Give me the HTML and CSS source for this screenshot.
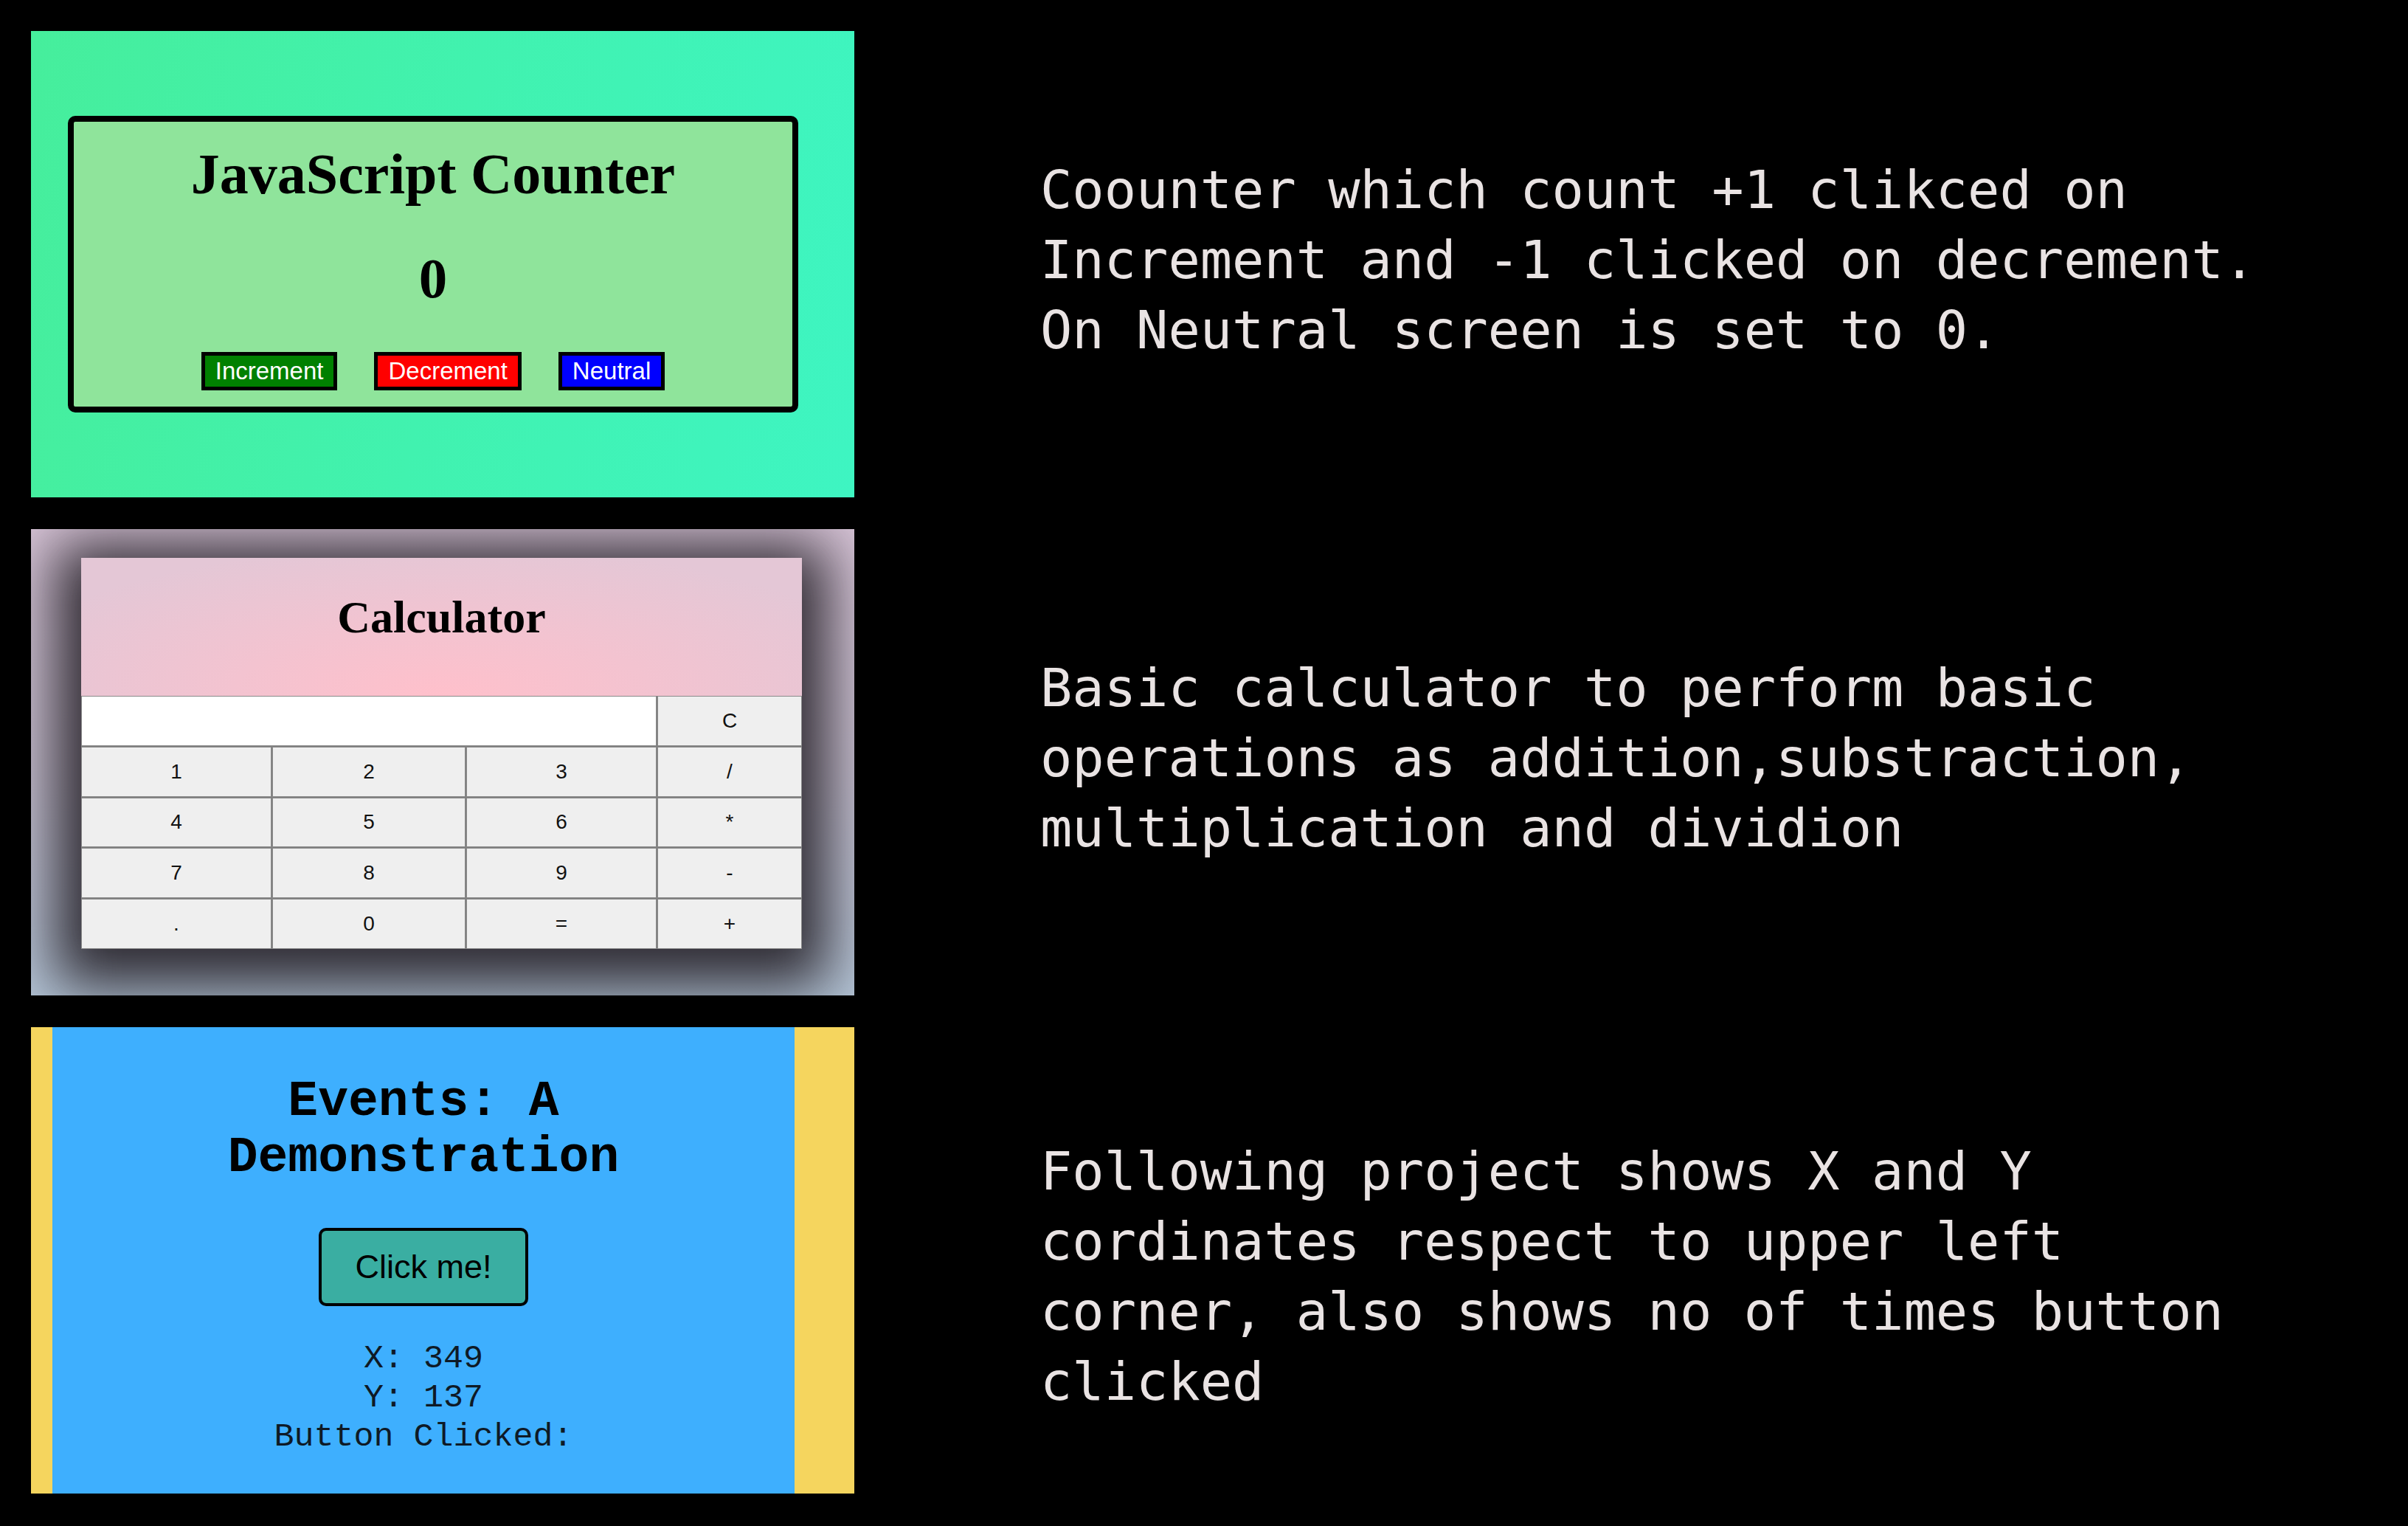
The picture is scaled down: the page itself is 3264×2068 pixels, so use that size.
FILE: index.html
```html
<!DOCTYPE html>
<html lang="en">
<head>
<meta charset="utf-8">
<title>JavaScript Projects</title>
<link rel="stylesheet" href="styles.css">
</head>
<body>
<main class="showcase">
  <section class="panel panel--counter">
    <div class="counter">
      <h1 class="counter__title">JavaScript Counter</h1>
      <div class="counter__value">0</div>
      <div class="counter__actions">
        <button class="counter__btn counter__btn--inc">Increment</button>
        <button class="counter__btn counter__btn--dec">Decrement</button>
        <button class="counter__btn counter__btn--neu">Neutral</button>
      </div>
    </div>
  </section>
  <p class="desc">Coounter which count +1 clikced on Increment and -1 clicked on decrement. On Neutral screen is set to 0.</p>

  <section class="panel panel--calc">
    <div class="calc">
      <div class="calc__head">
        <h1 class="calc__title">Calculator</h1>
      </div>
      <div class="calc__grid">
        <div class="calc__display"></div>
        <button class="calc__key">C</button>
        <button class="calc__key">1</button>
        <button class="calc__key">2</button>
        <button class="calc__key">3</button>
        <button class="calc__key">/</button>
        <button class="calc__key">4</button>
        <button class="calc__key">5</button>
        <button class="calc__key">6</button>
        <button class="calc__key">*</button>
        <button class="calc__key">7</button>
        <button class="calc__key">8</button>
        <button class="calc__key">9</button>
        <button class="calc__key">-</button>
        <button class="calc__key">.</button>
        <button class="calc__key">0</button>
        <button class="calc__key">=</button>
        <button class="calc__key">+</button>
      </div>
    </div>
  </section>
  <p class="desc">Basic calculator to perform basic operations as addition,substraction, multiplication and dividion</p>

  <section class="panel panel--events">
    <div class="events">
      <h1 class="events__title">Events: A Demonstration</h1>
      <button class="events__btn">Click me!</button>
      <div class="events__coords">
        <div>X: 349</div>
        <div>Y: 137</div>
        <div>Button Clicked:</div>
      </div>
    </div>
  </section>
  <p class="desc desc--low">Following project shows X and Y cordinates respect to upper left corner, also shows no of times button clicked</p>
</main>
</body>
</html>
```

FILE: styles.css
```css
* {
  box-sizing: border-box;
}

body {
  margin: 0;
  background: #000;
}

.showcase {
  display: grid;
  grid-template-columns: 1116px 1fr;
  grid-auto-rows: 632px;
  row-gap: 43px;
  column-gap: 252px;
  padding: 42px;
}

.panel {
  overflow: hidden;
}

/* ---------- descriptions ---------- */
.desc {
  align-self: center;
  margin: 0;
  width: 39ch;
  padding-bottom: 11px;
  font-family: "DejaVu Sans Mono", monospace;
  font-size: 72px;
  line-height: 95px;
  color: #e9e3e3;
}

.desc--low {
  margin-top: 54px;
}

/* ---------- counter ---------- */
.panel--counter {
  display: flex;
  align-items: center;
  padding-left: 50px;
  background: linear-gradient(100deg, #46ee9c 0%, #41f2af 50%, #3ef5c2 100%);
}

.counter {
  width: 990px;
  height: 402px;
  border: 8px solid #000;
  border-radius: 10px;
  background: #8fe49b;
  text-align: center;
  padding-top: 27px;
  font-family: "Liberation Serif", "Times New Roman", serif;
}

.counter__title {
  margin: 0;
  font-size: 78px;
  line-height: 87px;
  font-weight: bold;
  color: #000;
}

.counter__value {
  margin-top: 55px;
  font-size: 77px;
  line-height: 87px;
  font-weight: bold;
  color: #000;
}

.counter__actions {
  display: flex;
  justify-content: center;
  gap: 50px;
  margin-top: 56px;
}

.counter__btn {
  margin: 0;
  padding: 2px 14px;
  border: 5px solid #000;
  border-radius: 0;
  font-family: "Liberation Sans", Arial, sans-serif;
  font-size: 33px;
  line-height: 38px;
  color: #fff;
}

.counter__btn--inc { background: #008000; }
.counter__btn--dec { background: #ff0000; }
.counter__btn--neu { background: #0000ff; }

/* ---------- calculator ---------- */
.panel--calc {
  padding: 39px 0 0 68px;
  background: linear-gradient(180deg, #d9c6d9 0%, #cdc5d6 50%, #b7c8da 100%);
}

.calc {
  width: 977px;
  box-shadow: 0 16px 75px 36px rgba(30, 26, 32, 0.9);
}

.calc__head {
  height: 187px;
  padding-top: 45px;
  text-align: center;
  background: radial-gradient(ellipse 65% 110% at 50% 100%, #ffc0cb 0%, #f3c3d0 45%, #e4c7d6 100%);
}

.calc__title {
  margin: 0;
  font-family: "Liberation Serif", "Times New Roman", serif;
  font-size: 62px;
  line-height: 71px;
  font-weight: bold;
  color: #000;
}

.calc__grid {
  display: grid;
  grid-template-columns: 258px 262px 258px 196px;
  grid-template-rows: repeat(5, 1fr);
  gap: 1px;
  height: 343px;
  background: #7e7e7e;
}

.calc__display {
  grid-column: span 3;
  background: #fff;
  border: 1px solid #8a8a8a;
}

.calc__key {
  margin: 0;
  padding: 0;
  border: 1px solid #8a8a8a;
  border-radius: 0;
  background: #efefef;
  font-family: "Liberation Sans", Arial, sans-serif;
  font-size: 28px;
  color: #111;
}

/* ---------- events ---------- */
.panel--events {
  display: flex;
  padding-left: 29px;
  padding-right: 81px;
  background: #f5d55e;
}

.events {
  flex: 1;
  display: flex;
  flex-direction: column;
  align-items: center;
  padding-top: 63px;
  background: #3eaffe;
  text-align: center;
}

.events__title {
  margin: 0;
  max-width: 16ch;
  font-family: "Liberation Mono", "Courier New", monospace;
  font-size: 68px;
  line-height: 76px;
  font-weight: bold;
  color: #000;
}

.events__btn {
  margin-top: 57px;
  padding: 23px 45px;
  border: 4px solid #000;
  border-radius: 10px;
  background: #3aaea2;
  font-family: "Liberation Sans", Arial, sans-serif;
  font-size: 45px;
  line-height: 52px;
  color: #000;
}

.events__coords {
  margin-top: 45px;
  font-family: "Liberation Mono", "Courier New", monospace;
  font-size: 45px;
  line-height: 53px;
  color: #0e1a26;
}
```
